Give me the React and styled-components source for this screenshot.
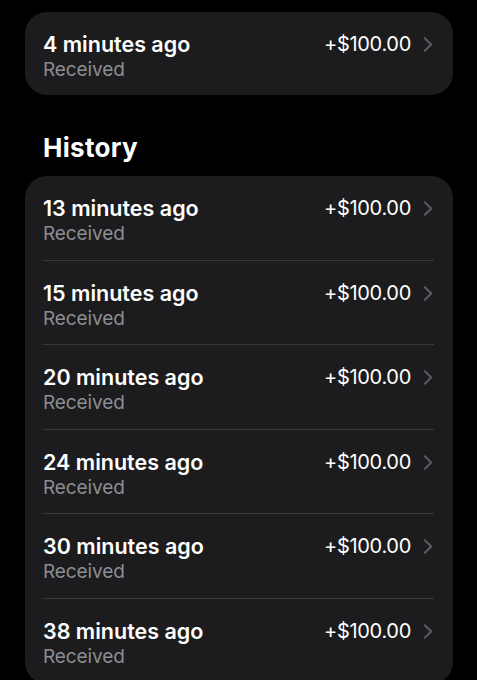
import styled, { createGlobalStyle } from 'styled-components';

const GlobalStyle = createGlobalStyle`
	html, body {
		margin: 0;
		padding: 0;
		background: #000;
	}
	body {
		font-family: Inter, "Noto Sans", sans-serif;
		color: #fff;
		-webkit-font-smoothing: antialiased;
	}
`;

const Page = styled.div`
	padding: 12px 24px 0 25px;
`;

const Card = styled.div`
	background: #1c1c1e;
	border-radius: 22px;
	padding: 0 19px 0 18px;
	overflow: hidden;
`;

const Heading = styled.h2`
	margin: 37px 0 13px 18px;
	font-size: 26px;
	line-height: 31px;
	font-weight: 700;
	letter-spacing: 0.3px;
`;

const Row = styled.div`
	display: flex;
	justify-content: space-between;
	align-items: flex-start;
	box-sizing: border-box;
	height: ${({ $last }) => ($last ? '83px' : '84.6px')};
	padding-top: 20px;
	border-bottom: ${({ $last }) => ($last ? 'none' : '1px solid #38383a')};
`;

const Info = styled.div`
	display: flex;
	flex-direction: column;
`;

const Title = styled.span`
	font-size: 21.5px;
	line-height: 25px;
	font-weight: 600;
`;

const Subtitle = styled.span`
	font-size: 19px;
	line-height: 25px;
	color: #8d8d93;
	letter-spacing: -0.1px;
`;

const Trailing = styled.div`
	display: flex;
	align-items: center;
	gap: 12px;
	height: 25px;
	margin-right: 1px;
`;

const Amount = styled.span`
	font-size: 20px;
	line-height: 25px;
	letter-spacing: -0.3px;
`;

const Chevron = () => (
	<svg width="10" height="15" viewBox="0 0 10 15" fill="none">
		<path
			d="M1.8 1.2L8.2 7.5L1.8 13.8"
			stroke="#5b5b60"
			strokeWidth="2"
			strokeLinecap="round"
			strokeLinejoin="round"
		/>
	</svg>
);

const Transaction = ({ time, amount, last }) => (
	<Row $last={last}>
		<Info>
			<Title>{time}</Title>
			<Subtitle>Received</Subtitle>
		</Info>
		<Trailing>
			<Amount>{amount}</Amount>
			<Chevron />
		</Trailing>
	</Row>
);

const history = [
	'13 minutes ago',
	'15 minutes ago',
	'20 minutes ago',
	'24 minutes ago',
	'30 minutes ago',
	'38 minutes ago',
];

export default function App() {
	return (
		<>
			<GlobalStyle />
			<Page>
				<Card>
					<Transaction time="4 minutes ago" amount="+$100.00" last />
				</Card>
				<Heading>History</Heading>
				<Card>
					{history.map((time) => (
						<Transaction key={time} time={time} amount="+$100.00" />
					))}
				</Card>
			</Page>
		</>
	);
}
